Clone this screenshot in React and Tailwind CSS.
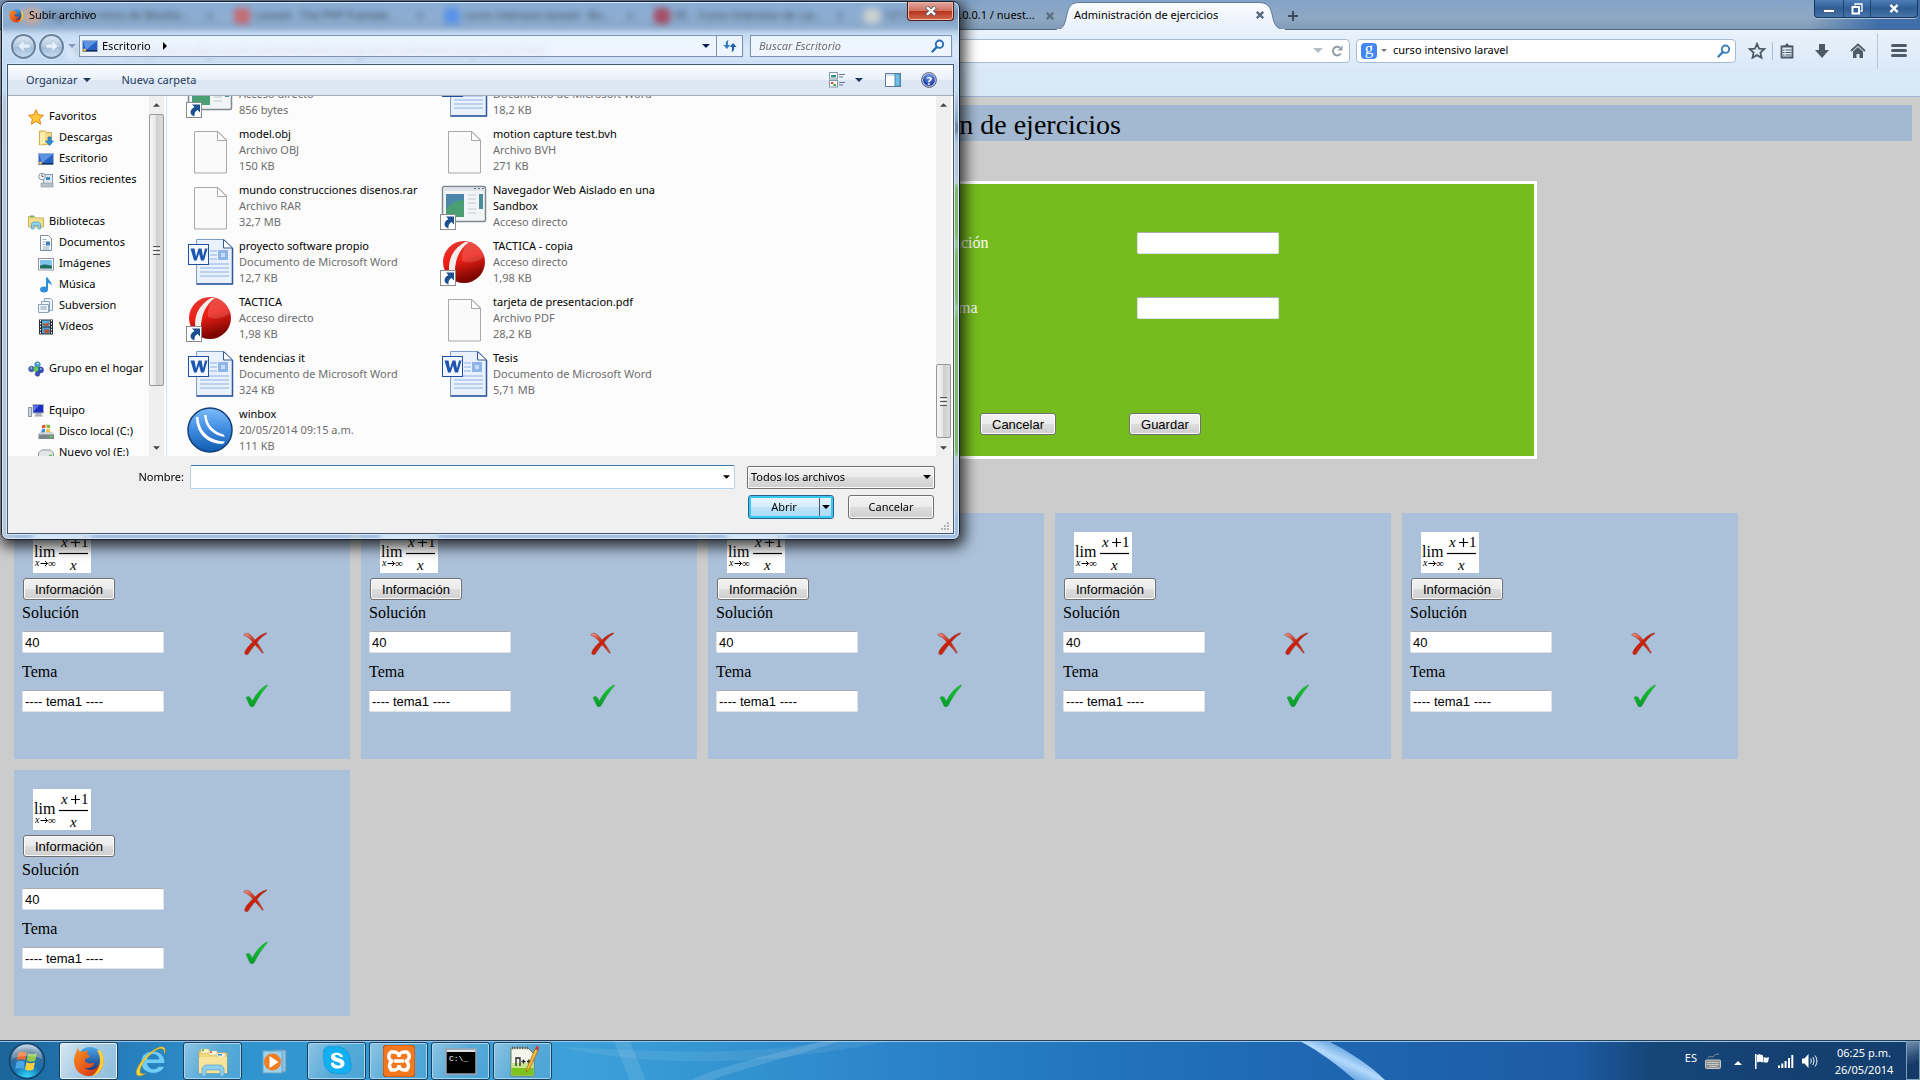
import React from "react";

const ui = "font-['Noto_Sans','Open_Sans',sans-serif]";
const arial = "font-['Liberation_Sans',Arial,sans-serif]";
const serif = "font-['Liberation_Serif','Times_New_Roman',serif]";

/* ---------- small shared glyphs ---------- */

function Triangle({ className = "", dir = "down" }) {
  const d = { down: "M0 0h8L4 4z", right: "M0 0v8l4-4z", up: "M0 4h8L4 0z" }[dir];
  const box = dir === "right" ? "0 0 4 8" : "0 0 8 4";
  return (
    <svg viewBox={box} className={className} fill="currentColor" aria-hidden="true">
      <path d={d} />
    </svg>
  );
}

function FirefoxIcon({ className }) {
  return (
    <svg viewBox="0 0 32 32" className={className} aria-hidden="true">
      <defs>
        <linearGradient id="ffGlobe" x1="0" y1="0" x2="0" y2="1">
          <stop offset="0" stopColor="#4aa8e8" />
          <stop offset="1" stopColor="#0f2f7a" />
        </linearGradient>
        <linearGradient id="ffTail" x1="0" y1="0" x2="1" y2="1">
          <stop offset="0" stopColor="#f7931e" />
          <stop offset="0.6" stopColor="#e5521b" />
          <stop offset="1" stopColor="#b8260f" />
        </linearGradient>
      </defs>
      <circle cx="17" cy="14.500" r="12.500" fill="url(#ffGlobe)" />
      <path d="M28 7c3 5 3.500 12 .5 17-3 5-9 7.500-14 7-8-1-13.500-7-13.500-15C1 12 2 9 3.500 7L4 3l3.500 4c1.500-.8 3-.8 4.500-.3L15 5l-1 4.500 3 1.500c-1 2-3 2-4.500 2.500-1 1.500-.5 3 1 4 3 2 6 0 8 .5-1 4-6 6-10 4.500 4 4 11 3 14-2 2-3.500 2.500-8 .5-12z" fill="url(#ffTail)" />
      <path d="M27 5c4 5 5 12 2 18-2 4-6 7-10 8 5-4 8-9 8-15 0-4-1-8-3-10z" fill="#ffcf3a" />
    </svg>
  );
}

function SearchGlyph({ className, color = "#3b7fb8" }) {
  return (
    <svg viewBox="0 0 14 14" className={className} fill="none" stroke={color} aria-hidden="true">
      <circle cx="8.500" cy="5.200" r="3.700" strokeWidth="1.900" />
      <path d="M5.800 8L1.500 12.500" strokeWidth="2.400" strokeLinecap="round" />
    </svg>
  );
}

/* ---------- browser ---------- */

const tabs = [
  { title: "Página de inicio de Mozilla...", color: "#e8a06a" },
  { title: "Laravel - The PHP Framew...", color: "#e04438" },
  { title: "curso intensivo laravel - Bu...", color: "#3f7fe8" },
  { title: "05. - Curso Intensivo de Lar...", color: "#b01820" },
  { title: "127.0.0.1 / 127.0.0.1 / nuest...", color: "#e8dcc0" },
];

function TabClose({ label }) {
  return (
    <button type="button" aria-label={label} className="shrink-0 text-[#5c6f83]">
      <svg viewBox="0 0 8 8" className="block h-2 w-2" stroke="currentColor" strokeWidth="2.400" aria-hidden="true">
        <path d="M.8.8l6.400 6.400M7.200.8L.8 7.200" />
      </svg>
    </button>
  );
}

function TabStrip() {
  return (
    <div className="relative flex h-[30px] items-end justify-between border-b border-[#4a6785] bg-[linear-gradient(180deg,#82a3c8_0%,#8fa8c3_60%,#829ab5_100%)]">
      <div className={`flex h-full pl-4 text-[11px] text-black ${ui}`}>
        {tabs.map((t) => (
          <div key={t.title} className="flex w-[210px] items-center gap-1 pl-2 pr-3 pt-0.5">
            <span className="h-4 w-4 shrink-0 rounded-sm" style={{ backgroundColor: t.color }} />
            <span className="flex-1 whitespace-nowrap">{t.title}</span>
            <TabClose label="Cerrar pestaña" />
          </div>
        ))}
        <div className="relative flex w-[210px] items-center justify-between px-2 pt-0.5">
          <svg viewBox="0 0 230 28" className="absolute -left-2.5 top-0.5 h-7 w-[230px]" aria-hidden="true">
            <defs>
              <linearGradient id="tabFill" x1="0" y1="0" x2="0" y2="1">
                <stop offset="0" stopColor="#fbfcfe" />
                <stop offset="1" stopColor="#e9f1fb" />
              </linearGradient>
            </defs>
            <path d="M0 28C9 27 9 20 11 12C13 3 16 .5 24 .5H202C211 .5 214 4 216 12C218 21 219 27 229 28z" fill="url(#tabFill)" stroke="#5f7d9c" />
            <path d="M1 28H229" stroke="#e9f1fb" strokeWidth="2" />
          </svg>
          <span className="relative">Administración de ejercicios</span>
          <span className="relative pr-1">
            <TabClose label="Cerrar pestaña activa" />
          </span>
        </div>
        <button type="button" aria-label="Nueva pestaña" className="ml-3 pt-0.5">
          <svg viewBox="0 0 10 10" className="h-2.5 w-2.5" stroke="#3b4c5c" strokeWidth="2" aria-hidden="true">
            <path d="M5 0v10M0 5h10" />
          </svg>
        </button>
      </div>
      <div className="flex h-full w-[160px] items-start justify-end bg-[linear-gradient(110deg,transparent_35%,#3f6ea8_75%)] pr-0.5">
        <div className="flex h-[18px] overflow-hidden rounded-b border border-t-0 border-[#16365c] bg-[linear-gradient(180deg,#4f7db5,#2f5d95_50%,#4876a8)] shadow-[0_1px_0_#a9c2dd]">
          <button type="button" aria-label="Minimizar" className="flex w-[29px] items-center justify-center border-r border-[#1f4470] pt-1">
            <span className="h-1 w-3 border border-[#50607a] bg-white" />
          </button>
          <button type="button" aria-label="Restaurar" className="flex w-[27px] items-center justify-center border-r border-[#1f4470]">
            <svg viewBox="0 0 12 12" className="h-3 w-3" fill="none" stroke="#fff" aria-hidden="true">
              <path d="M4 2.500V1h7v7H9.500" strokeWidth="1.300" />
              <rect x="1.500" y="4" width="6.500" height="6.500" strokeWidth="2" />
            </svg>
          </button>
          <button type="button" aria-label="Cerrar" className="flex w-[46px] items-center justify-center">
            <svg viewBox="0 0 10 10" className="h-[9px] w-2.5" stroke="#fff" strokeWidth="2.600" aria-hidden="true">
              <path d="M1 1l8 8M9 1L1 9" />
            </svg>
          </button>
        </div>
      </div>
    </div>
  );
}

function Toolbar() {
  return (
    <div className="h-[67px] border-b border-[#9fb8d3] bg-[linear-gradient(180deg,#eaf2fb_0%,#dae9f8_60%,#d9e8f7_100%)]">
      <div className="flex h-[41px] items-center pr-[13px]">
        <div className="ml-16 flex h-6 flex-1 items-center rounded-sm border border-[#a9bccf] bg-white pr-1.5">
          <input
            aria-label="Dirección"
            readOnly
            value="127.0.0.1/proyecto/codigo/web/administrador/preguntas/administrarejercicios.html"
            className={`min-w-0 flex-1 pl-2 text-[12px] text-[#333] outline-none ${ui}`}
          />
          <Triangle className="mr-2 h-[7px] w-2.5 text-[#b6bec8]" />
          <button type="button" aria-label="Recargar">
            <svg viewBox="0 0 12 12" className="block h-3 w-3" fill="none" stroke="#929da9" strokeWidth="2" aria-hidden="true">
              <path d="M9.800 8.500A4.300 4.300 0 1 1 9 2.800" />
              <path d="M11.500.5v5H6.500z" fill="#929da9" stroke="none" />
            </svg>
          </button>
        </div>
        <div className="ml-1.5 flex h-6 w-[380px] items-center rounded-sm border border-[#a9bccf] bg-white px-1">
          <span className="flex h-4 w-4 items-center justify-center rounded-sm bg-[#4285f4] pb-1 font-['Liberation_Serif',serif] text-[17px] leading-[10px] text-white">g</span>
          <Triangle className="ml-1 h-[3px] w-1.5 text-[#777]" />
          <input aria-label="Buscar" defaultValue="curso intensivo laravel" className={`ml-1.5 min-w-0 flex-1 text-[11px] text-black outline-none ${ui}`} />
          <SearchGlyph className="h-3.5 w-3.5" />
        </div>
        <div className="flex items-center text-[#4d5b68]">
          <button type="button" aria-label="Añadir a marcadores" className="ml-3">
            <svg viewBox="0 0 18 18" className="block h-[18px] w-[18px]" fill="none" stroke="currentColor" strokeWidth="1.800" aria-hidden="true">
              <path d="M9 1.800l2.100 4.800 5.200.5-3.900 3.500 1.100 5.100L9 13.100l-4.500 2.600 1.100-5.100L1.700 7.100l5.200-.5z" />
            </svg>
          </button>
          <span className="ml-1.5 h-[18px] w-px bg-[#a9c0d6]" />
          <button type="button" aria-label="Marcadores" className="ml-[7px]">
            <svg viewBox="0 0 14 16" className="block h-4 w-3.5" aria-hidden="true">
              <path d="M1.500 3.500h11v11h-11z" fill="none" stroke="currentColor" strokeWidth="1.800" />
              <path d="M3 4h8V2.500H9L7 0 5 2.500H3z" fill="currentColor" />
              <path d="M3 7h1.500M5.500 7h6M3 9.500h1.500M5.500 9.500h6M3 12h1.500M5.500 12h6" stroke="currentColor" strokeWidth="1.200" />
            </svg>
          </button>
          <button type="button" aria-label="Descargas" className="ml-[21px]">
            <svg viewBox="0 0 14 14" className="block h-3.5 w-3.5" fill="currentColor" aria-hidden="true">
              <path d="M4 0h6v6h4l-7 8-7-8h4z" />
            </svg>
          </button>
          <button type="button" aria-label="Inicio" className="ml-[21px]">
            <svg viewBox="0 0 16 15" className="block h-[15px] w-4" aria-hidden="true">
              <path d="M1 8l7-6.500L15 8" fill="none" stroke="currentColor" strokeWidth="1.800" />
              <path d="M3 8.500l5-4.600 5 4.600V15H9.500v-4h-3v4H3z" fill="currentColor" />
            </svg>
          </button>
          <span className="ml-[11px] h-9 w-px bg-[#b4c6d8]" />
          <button type="button" aria-label="Menú" className="ml-[13px] flex w-4 flex-col gap-0.5">
            <span className="h-[3px] rounded bg-[#4d5b68]" />
            <span className="h-[3px] rounded bg-[#4d5b68]" />
            <span className="h-[3px] rounded bg-[#4d5b68]" />
          </button>
        </div>
      </div>
    </div>
  );
}

/* ---------- web page ---------- */

function PageButton({ children }) {
  return (
    <button
      type="button"
      className={`h-[22px] rounded-[3px] border border-[#707070] bg-[linear-gradient(180deg,#f2f2f2_0%,#ebebeb_50%,#dddddd_50%,#cfcfcf_100%)] px-[11px] text-[13px] leading-none text-black shadow-[inset_0_0_0_1px_#fcfcfc] ${arial}`}
    >
      {children}
    </button>
  );
}

function TextBox(props) {
  return (
    <input
      type="text"
      className={`block h-[22px] w-[142px] rounded-[2px] border border-[#dfe3ea] border-t-[#abadb3] bg-white px-0.5 text-[13px] text-black outline-none ${arial}`}
      {...props}
    />
  );
}

function LimitFormula() {
  return (
    <svg viewBox="0 0 58 41" role="img" aria-label="Límite" className={`block h-[41px] w-[58px] bg-white ${serif}`}>
      <text x="1" y="25" fontSize="16">lim</text>
      <text x="2" y="34" fontSize="10" fontStyle="italic">x</text>
      <path d="M7.500 31.500h7M12 29l2.500 2.500L12 34" fill="none" stroke="#000" />
      <text x="15" y="35" fontSize="11">∞</text>
      <text x="28" y="15" fontSize="15" fontStyle="italic">x</text>
      <path d="M38 10.500h9M42.500 6v9" stroke="#000" strokeWidth="1.200" />
      <text x="48" y="15" fontSize="15">1</text>
      <path d="M26 21.500h29" stroke="#000" strokeWidth="1.200" />
      <text x="37" y="38" fontSize="15" fontStyle="italic">x</text>
    </svg>
  );
}

function ExerciseCard({ id }) {
  return (
    <article className={`h-[246px] w-[336px] bg-[#abc1d9] px-2 pt-[19px] text-[16px] leading-5 text-black ${serif}`}>
      <div className="ml-[11px]">
        <LimitFormula />
      </div>
      <div className="ml-px mt-[5px] flex">
        <PageButton>Información</PageButton>
      </div>
      <label htmlFor={`sol-${id}`} className="mt-[3px] block">Solución</label>
      <div className="mt-[5px] flex h-7 items-center gap-[79px]">
        <TextBox id={`sol-${id}`} defaultValue="40" />
        <button type="button" aria-label="Eliminar" className="pt-1">
          <svg viewBox="0 0 24 24" className="block h-6 w-6" aria-hidden="true">
            <defs>
              <linearGradient id="cross" x1="0" y1="0" x2="1" y2="1">
                <stop offset="0" stopColor="#f0a090" />
                <stop offset="0.45" stopColor="#c81e08" />
                <stop offset="1" stopColor="#d8452c" />
              </linearGradient>
            </defs>
            <path d="M.5 3C2 .8 5 .8 7 2.500c2 1.600 3.500 3.500 5 5.500C15.500 4.500 19 2 23.500.8c.5.600-.2 1.200-.7 1.500C19.500 4.200 16.500 7 14 10.500c2.500 3.500 4.800 7 6.300 10.500-.5.400-1 .2-1.500-.5C16.500 17.500 14.200 15 12 12.800 9.500 16 7 19 5.500 21.800c-1.500 1.500-4 .9-3.800-1.300C3 16.500 6.500 13 9.700 10 7.500 7 5 5 .5 3z" fill="url(#cross)" stroke="#8d3a33" strokeWidth=".5" />
          </svg>
        </button>
      </div>
      <label htmlFor={`tema-${id}`} className="mt-1.5 block">Tema</label>
      <div className="mt-0.5 flex h-7 items-end gap-[81px]">
        <TextBox id={`tema-${id}`} defaultValue="---- tema1 ----" />
        <button type="button" aria-label="Aceptar" className="self-start">
          <svg viewBox="0 0 24 24" className="block h-6 w-6" aria-hidden="true">
            <defs>
              <linearGradient id="tick" x1="0" y1="0" x2="0" y2="1">
                <stop offset="0" stopColor="#0fce28" />
                <stop offset="1" stopColor="#079a2a" />
              </linearGradient>
            </defs>
            <path d="M1 13.500C2.500 12 4.500 12 5.500 14L7.300 17C11 10 15.500 4.500 22 .8c.5.200.6.700.2 1.100C17 8 13 14 9.200 21.500c-1 1.600-3.600 1.700-4.300.2z" fill="url(#tick)" stroke="#2f8f48" strokeWidth=".5" />
          </svg>
        </button>
      </div>
    </article>
  );
}

function ExercisePage() {
  return (
    <main className={`flex-1 p-2 ${serif}`}>
      <h1 className="bg-[#a3b8d1] pt-1 text-center text-[28px] leading-8 text-black">Administración de ejercicios</h1>
      <form className="mx-auto mt-10 w-[1154px] max-w-full border-[3px] border-white bg-[#76bc1e] pb-[21px] pt-[26px] text-[16px] text-white">
        <div className="grid grid-cols-[1fr_249px_1fr] items-center">
          <span />
          <label htmlFor="nueva-solucion" className="text-center leading-[65px]">Solución</label>
          <div className="pl-[52px]"><TextBox id="nueva-solucion" /></div>
          <span />
          <label htmlFor="nuevo-tema" className="text-center leading-[65px]">Tema</label>
          <div className="pl-[52px]"><TextBox id="nuevo-tema" /></div>
        </div>
        <div className="ml-[50%] mt-[73px] flex gap-[73px] pl-5">
          <PageButton>Cancelar</PageButton>
          <PageButton>Guardar</PageButton>
        </div>
      </form>
      <section className="mt-[54px] flex flex-wrap gap-[11px] px-1.5">
        {[1, 2, 3, 4, 5, 6].map((n) => (
          <ExerciseCard key={n} id={n} />
        ))}
      </section>
    </main>
  );
}

/* ---------- file dialog icons ---------- */

function ShortcutArrow() {
  return (
    <g>
      <rect x=".5" y="32.500" width="15" height="15" fill="#fff" stroke="#8b8b8b" />
      <path d="M6 34.500h8v8l-2.500-2.500c-2.500 1.500-3.500 3.500-3 6.500C4 45 2.500 40.500 8.500 37z" fill="#1d4f93" />
    </g>
  );
}

function FileIcon({ kind, link }) {
  return (
    <svg viewBox="0 0 48 48" className="block h-12 w-12 shrink-0" aria-hidden="true">
      {kind === "blank" && (
        <g>
          <path d="M8.500 5.500H32l8.500 8.500v33h-32z" fill="#fafafa" stroke="#a9a9a9" />
          <path d="M31.500 5.500V14.500h9z" fill="#fff" stroke="#a9a9a9" />
        </g>
      )}
      {kind === "word" && (
        <g>
          <path d="M10.500.5H38l8.500 8.500v36h-36z" fill="#e8f1fd" stroke="#7c9ccb" />
          <path d="M46.500 9v36h-36" fill="none" stroke="#2d569c" strokeWidth="1.500" />
          <path d="M37.500.5V9h9z" fill="#fff" stroke="#34599a" />
          <path d="M24 12h7M24 16h7M24 20h7M14 25h29M14 29h29M14 33h29M14 37h29" stroke="#8fb0df" />
          <rect x="32" y="11" width="10" height="10" fill="#8fb4ea" />
          <rect x="35" y="14" width="4" height="4" fill="#c7dcf8" />
          <rect x="2.500" y="5.500" width="20" height="20" fill="#f4f8fe" stroke="#1f4fa0" />
          <path d="M4.500 9.500h4l1.500 8 2.500-8h3l1.500 8 2-8h2.500l-3.500 12h-3l-2-7-2.300 7H8z" fill="#1c55b0" />
        </g>
      )}
      {kind === "window" && (
        <g>
          <rect x="2.500" y="4.500" width="43" height="35" rx="1.500" fill="#f3f4f6" stroke="#7f8790" strokeWidth="1.500" />
          <path d="M3 6h42v3H3z" fill="#dfe4ea" />
          <path d="M34 6.500h2M38 6.500h2M42 6.500h2" stroke="#5c6877" />
          <rect x="6" y="12" width="18" height="23" fill="#4a9f72" />
          <path d="M6 12h18v6C16 18 10 22 6 28z" fill="#4c86a8" />
          <path d="M28 13h8M28 17h8M28 21h8M28 27h8M28 31h8" stroke="#c6c9cd" />
          <rect x="39" y="12" width="4" height="15" fill="#4b8d9b" />
        </g>
      )}
      {kind === "ball" && (
        <g>
          <defs>
            <linearGradient id="redBall" x1="0" y1="0" x2="0.300" y2="1">
              <stop offset="0" stopColor="#e03a34" />
              <stop offset="0.5" stopColor="#ee2018" />
              <stop offset="1" stopColor="#7c0500" />
            </linearGradient>
          </defs>
          <circle cx="24" cy="24" r="21" fill="url(#redBall)" />
          <path d="M29 4C18 12 14 24 15 40l-5-3C7 25 11 12 25 4z" fill="#f1eeee" />
          <path d="M22 23c8 3 16 1 22-4C42 10 36 5 29 4c-5 5-8 11-7 19z" fill="#fff" opacity=".15" />
        </g>
      )}
      {kind === "winbox" && (
        <g>
          <defs>
            <linearGradient id="wbx" x1="0" y1="0" x2="0" y2="1">
              <stop offset="0" stopColor="#7cbbfa" />
              <stop offset="0.5" stopColor="#3f8be0" />
              <stop offset="1" stopColor="#0f5bb0" />
            </linearGradient>
          </defs>
          <circle cx="24" cy="24" r="22" fill="url(#wbx)" stroke="#123f78" strokeWidth="1.500" />
          <path d="M10 11c0 15 10 27 27 27l2-2.500C24 35 13 26 12.500 11z" fill="#fff" />
          <path d="M18 9c1 12 8 20 21 22l-1.500-2.500C28 26 21 19 20.500 9z" fill="#fff" />
        </g>
      )}
      {link && <ShortcutArrow />}
    </svg>
  );
}

function NavIcon({ kind }) {
  const icons = {
    star: <path d="M8 .8l2.200 4.900 5.300.6-3.900 3.600 1.100 5.300L8 12.500l-4.700 2.700 1.100-5.300L.5 6.300l5.300-.6z" fill="#ffc83a" stroke="#e8831d" />,
    download: (
      <g>
        <path d="M1.500 1h6l1 1.500h5V14l-12 1z" fill="#f3d982" stroke="#cfae55" />
        <path d="M2 3l5-1.500V13l-5 2z" fill="#fbeeb0" />
        <path d="M10 7h3v4h2.500L11.500 15.500 7.500 11H10z" fill="#2d8fe0" stroke="#1566ad" strokeWidth=".6" />
      </g>
    ),
    desktop: (
      <g>
        <rect x=".5" y="2.500" width="15" height="11" fill="#2662c4" stroke="#9db1cc" />
        <path d="M1 3h14L4 12z" fill="#5d93e4" />
        <path d="M1 12h14v1.500H1z" fill="#16305e" />
        <circle cx="2.500" cy="12" r="1.500" fill="#f3c14b" />
      </g>
    ),
    recent: (
      <g>
        <rect x="5.500" y="2.500" width="9" height="9" fill="#dce9f4" stroke="#8b99a7" />
        <path d="M8 5h4v3H8z" fill="#3f8ac9" />
        <path d="M3 11h12v4H3z" fill="#b9c0c8" stroke="#8a929b" strokeWidth=".6" />
        <circle cx="4" cy="4.500" r="3.300" fill="#f2f4f6" stroke="#8a95a0" />
        <path d="M4 2.500v2h1.500" stroke="#555" fill="none" />
      </g>
    ),
    library: (
      <g>
        <path d="M.5 2.500h6L8 4h7.500v9H.5z" fill="#f4dd88" stroke="#cdae58" />
        <path d="M2 1.500h4v2H2z" fill="#6bb36a" />
        <path d="M3.500 15V9.500l2-1.500h5l2 1.500V15H10v-3.500H6V15z" fill="#8cd0ee" stroke="#4a9cc4" strokeWidth=".7" />
      </g>
    ),
    doc: (
      <g>
        <path d="M2.500.5h8l3 3v12h-11z" fill="#fff" stroke="#7f8b98" />
        <path d="M4.500 4.500h4M4.500 7h3M4.500 9.500h3M4.500 12h7M4.500 14h7" stroke="#8fa9c4" />
        <rect x="8" y="6.500" width="4" height="4" fill="#3d7dbd" />
      </g>
    ),
    image: (
      <g>
        <rect x=".5" y="2.500" width="15" height="11.500" fill="#fff" stroke="#8c97a3" />
        <rect x="2" y="4" width="12" height="8.500" fill="#7fc4ee" />
        <path d="M2 10c3-2 5-2 12 0v2.500H2z" fill="#1f6e5c" />
      </g>
    ),
    music: (
      <g fill="#2d8fd6">
        <path d="M8 .5h2c0 3 4.500 4 3.500 8.500C13 7 11.500 6 10 6v6.500H8z" />
        <ellipse cx="6" cy="12.500" rx="4" ry="3" />
      </g>
    ),
    svn: (
      <g fill="#eef4fb" stroke="#8aa3bd">
        <path d="M6.500.5h6l2 2v10h-8z" />
        <path d="M3.500 3.500h8v10h-8z" />
        <path d="M.5 6.500h10v8H.5z" />
        <path d="M2.500 9h6M2.500 11h6" />
      </g>
    ),
    video: (
      <g>
        <rect x="1" y=".5" width="14" height="15" fill="#2b2f35" />
        <rect x="4" y="1.500" width="8" height="6" fill="#5ab0dc" />
        <rect x="4" y="8.500" width="8" height="6" fill="#4f9ecb" />
        <path d="M5 4l3 1 3-2v3L8 7 5 6zM6 10l3 1 2-1v4H7z" fill="#c04a2c" />
        <path d="M2.500 1v14M13.500 1v14" stroke="#fff" strokeDasharray="1.500 1.500" />
      </g>
    ),
    group: (
      <g>
        <circle cx="9.500" cy="3.500" r="2.800" fill="#4aa7df" stroke="#1f5f9c" strokeWidth=".5" />
        <circle cx="3.500" cy="8" r="2.800" fill="#4a62c4" stroke="#26347c" strokeWidth=".5" />
        <circle cx="12.500" cy="9" r="3" fill="#2f4fc0" stroke="#1b2c78" strokeWidth=".5" />
        <circle cx="8" cy="8" r="2.600" fill="#5fd05c" stroke="#2b8a2c" strokeWidth=".5" />
        <circle cx="9.500" cy="13" r="2.300" fill="#3c53b5" stroke="#1b2c78" strokeWidth=".5" />
        <path d="M2.500 7h1.500M9 2.500h1.500M12 8h1.500" stroke="#fff" />
      </g>
    ),
    computer: (
      <g>
        <rect x=".5" y="4.500" width="3" height="9" fill="#cfd6dc" stroke="#8d98a2" />
        <rect x="5" y="1.500" width="10.500" height="8.500" fill="#1b2fc0" stroke="#a9b2bd" />
        <path d="M6 2.500h5L6 8z" fill="#5d78ee" />
        <path d="M8 10.500h5v2H8zM6 13h9" fill="#b7bfc7" stroke="#a0a8b0" />
      </g>
    ),
    disk: (
      <g>
        <path d="M.5 10l2-2h11l2.500 2v5H.5z" fill="#7d868f" />
        <path d="M.5 10.500H16V9.500l-2.500-2h-11z" fill="#d0d5da" />
        <path d="M11.500 12.700h3" stroke="#4ce04a" strokeWidth="1.500" />
        <path d="M4 1.500l3.500-1v3.300l-3.500.8z" fill="#e6552d" />
        <path d="M8.500.5l3.500.6v3.200l-3.500-.5z" fill="#7cba3f" />
        <path d="M3.500 5.500L7 4.800V8l-3.500.6z" fill="#3d8fd6" />
        <path d="M8.300 4.800l3.500.5v3.200L8.300 8z" fill="#f3c22e" />
      </g>
    ),
    drive: (
      <g>
        <path d="M.5 8l3-3h9l3 3v5h-15z" fill="#e3e6e9" stroke="#8c949c" />
        <path d="M11 10.500h3" stroke="#4cc04a" strokeWidth="1.500" />
      </g>
    ),
  };
  return (
    <svg viewBox="0 0 16 16" className="h-4 w-4 shrink-0" aria-hidden="true">
      {icons[kind]}
    </svg>
  );
}

const places = [
  { root: ["Favoritos", "star"], items: [["Descargas", "download"], ["Escritorio", "desktop"], ["Sitios recientes", "recent"]] },
  { root: ["Bibliotecas", "library"], items: [["Documentos", "doc"], ["Imágenes", "image"], ["Música", "music"], ["Subversion", "svn"], ["Vídeos", "video"]] },
  { root: ["Grupo en el hogar", "group"], items: [] },
  { root: ["Equipo", "computer"], items: [["Disco local (C:)", "disk"], ["Nuevo vol (E:)", "drive"]] },
];

const files = [
  { lines: ["", "Acceso directo", "856 bytes"], kind: "window", link: true },
  { lines: ["", "Documento de Microsoft Word", "18,2 KB"], kind: "word" },
  { lines: ["model.obj", "Archivo OBJ", "150 KB"], kind: "blank" },
  { lines: ["motion capture test.bvh", "Archivo BVH", "271 KB"], kind: "blank" },
  { lines: ["mundo construcciones disenos.rar", "Archivo RAR", "32,7 MB"], kind: "blank" },
  { lines: ["Navegador Web Aislado en una", "Sandbox", "Acceso directo"], kind: "window", link: true, dark: 2 },
  { lines: ["proyecto software propio", "Documento de Microsoft Word", "12,7 KB"], kind: "word" },
  { lines: ["TACTICA - copia", "Acceso directo", "1,98 KB"], kind: "ball", link: true },
  { lines: ["TACTICA", "Acceso directo", "1,98 KB"], kind: "ball", link: true },
  { lines: ["tarjeta de presentacion.pdf", "Archivo PDF", "28,2 KB"], kind: "blank" },
  { lines: ["tendencias it", "Documento de Microsoft Word", "324 KB"], kind: "word" },
  { lines: ["Tesis", "Documento de Microsoft Word", "5,71 MB"], kind: "word" },
  { lines: ["winbox", "20/05/2014 09:15 a.m.", "111 KB"], kind: "winbox" },
];

function Grip() {
  return (
    <span className="flex w-[7px] flex-col gap-px">
      <span className="h-px bg-[#555]" />
      <span className="h-px bg-white" />
      <span className="h-px bg-[#555]" />
      <span className="h-px bg-white" />
      <span className="h-px bg-[#555]" />
    </span>
  );
}

function ScrollBar({ before, thumb }) {
  return (
    <div className="flex w-[15px] shrink-0 flex-col bg-[#efefef]">
      <span className="flex h-[18px] items-center justify-center">
        <Triangle dir="up" className="h-1 w-[7px] text-[#444]" />
      </span>
      <div className={before} />
      <div className={`${thumb} flex items-center justify-center rounded-[2px] border border-[#979797] bg-[linear-gradient(90deg,#f5f5f5_0%,#e6e6e6_45%,#cfcfd1_50%,#dcdcdc_100%)]`}>
        <Grip />
      </div>
      <div className="flex-1" />
      <span className="flex h-4 items-center justify-center">
        <Triangle className="h-1 w-[7px] text-[#444]" />
      </span>
    </div>
  );
}

function RoundArrow({ flip, label }) {
  return (
    <button type="button" aria-label={label} className="h-[25px] w-[25px] rounded-full border-2 border-[#6c83a0] bg-[linear-gradient(180deg,#dce8f4_0%,#b4c8de_50%,#9fb9d6_51%,#c5dcf2_100%)] shadow-[0_0_1px_1px_#d6e6f6]">
      <svg viewBox="0 0 16 16" className={flip ? "mx-auto block h-4 w-4 rotate-180" : "mx-auto block h-4 w-4"} aria-hidden="true">
        <path d="M8 2L2 8l6 6v-4h6V6H8z" fill="#e6f0fa" stroke="#b3c7dd" strokeWidth=".7" />
      </svg>
    </button>
  );
}

function FileDialog() {
  return (
    <section
      role="dialog"
      aria-label="Subir archivo"
      className={`absolute left-px top-px flex w-[959px] flex-col rounded-[7px] border border-[#17202c] bg-[#8fbdf055] px-[5px] pb-[5px] text-[11px] text-black shadow-[inset_0_0_0_1px_#d9e8f8,2px_4px_14px_3px_rgba(0,0,0,0.75)] backdrop-blur-[3px] ${ui}`}
    >
      <header className="flex h-7 items-start justify-between pl-0.5">
        <h2 className="flex h-[27px] items-center gap-[5px]">
          <FirefoxIcon className="h-[15px] w-[15px]" />
          Subir archivo
        </h2>
        <button type="button" aria-label="Cerrar diálogo" className="flex h-[19px] w-[47px] items-center justify-center rounded-b-[4px] border border-t-0 border-[#5a1712] bg-[linear-gradient(180deg,#e0a79c_0%,#cf7262_48%,#b8321d_50%,#cd6a4e_100%)] shadow-[inset_0_0_0_1px_#eab9ae]">
          <svg viewBox="0 0 12 10" className="h-2.5 w-3" aria-hidden="true">
            <path d="M1.500 1l9 8M10.500 1l-9 8" stroke="#56606e" strokeWidth="3.800" />
            <path d="M2 1.400l8 7.200M10 1.400l-8 7.200" stroke="#fff" strokeWidth="2.200" />
          </svg>
        </button>
      </header>

      <div className="flex h-[34px] items-center pb-0.5 pl-1 pr-0.5">
        <RoundArrow label="Atrás" />
        <span className="w-[3px]" />
        <RoundArrow flip label="Adelante" />
        <Triangle className="ml-1 h-1.5 w-2 text-[#7f9cbe]" />
        <div className="ml-[3px] flex h-[22px] flex-1 items-center border border-[#7b94b2] bg-[#f4f9ffcc] shadow-[0_0_0_1px_#c9def5]">
          <span className="ml-0.5"><NavIcon kind="desktop" /></span>
          <span className="ml-1">Escritorio</span>
          <Triangle dir="right" className="ml-3 h-2 w-1" />
          <span className="flex-1" />
          <Triangle className="mr-1.5 h-1 w-2 text-[#0c1f57]" />
          <button type="button" aria-label="Actualizar" className="flex h-full w-[26px] items-center justify-center border-l border-[#7b94b2]">
            <svg viewBox="0 0 14 12" className="h-3 w-3.5" fill="#2f7cc4" aria-hidden="true">
              <path d="M5.500 0C3 1 2.500 2.500 2.800 5H.3L4 9l3.200-4H5c-.2-2 0-3.500.5-5z" />
              <path d="M8.500 12c2.500-1 3-2.500 2.700-5h2.500L10 3 6.800 7H9c.2 2 0 3.500-.5 5z" fill="#235fa6" />
            </svg>
          </button>
        </div>
        <div className="ml-[7px] flex h-[22px] w-[202px] items-center border border-[#7b94b2] bg-[#f4f9ffcc] pr-1.5 shadow-[0_0_0_1px_#c9def5]">
          <input aria-label="Buscar Escritorio" placeholder="Buscar Escritorio" className="min-w-0 flex-1 pl-2 italic outline-none placeholder:text-[#6d6d6d]" />
          <SearchGlyph className="h-3.5 w-3.5" color="#2a6db0" />
        </div>
      </div>

      <div className="flex flex-col border border-[#46586e] bg-[#f0f0f0] shadow-[0_0_0_1px_#d3e6fa]">
        <div className="flex h-[31px] items-center border-b border-[#a0afc3] bg-[linear-gradient(180deg,#fbfdff_0%,#eaf1fa_48%,#dce6f4_50%,#dde8f5_100%)] text-[#1e395b]">
          <button type="button" className="ml-[18px] flex items-center gap-1.5">
            Organizar
            <Triangle className="h-1 w-2" />
          </button>
          <button type="button" className="ml-[30px]">Nueva carpeta</button>
          <span className="flex-1" />
          <button type="button" aria-label="Cambiar vista" className="flex items-center gap-2.5">
            <svg viewBox="0 0 16 16" className="h-4 w-4" aria-hidden="true">
              <rect x=".5" y=".5" width="8" height="6.500" fill="#fff" stroke="#8796a6" />
              <rect x="2" y="3" width="5" height="2.500" fill="#2f8f7d" />
              <rect x=".5" y="8.500" width="8" height="6.500" fill="#fff" stroke="#8796a6" />
              <path d="M2 10h2.500v2H2z" fill="#d84a2a" />
              <path d="M4.500 12H7v2H4.500z" fill="#3aa23a" />
              <path d="M10 2.500h6M10 5h4M10 10.500h6M10 13h4" stroke="#65788e" />
            </svg>
            <Triangle className="h-1 w-2" />
          </button>
          <button type="button" aria-label="Panel de vista previa" className="ml-[22px]">
            <svg viewBox="0 0 16 14" className="block h-3.5 w-4" aria-hidden="true">
              <rect x=".5" y=".5" width="15" height="13" fill="#fff" stroke="#5e7c9c" />
              <path d="M1 1h14v2H1z" fill="#d2dfec" />
              <rect x="10" y="1" width="5" height="12" fill="#6fc0e4" stroke="#4a88ad" />
            </svg>
          </button>
          <button type="button" aria-label="Ayuda" className="ml-5 mr-4 flex h-4 w-4 items-center justify-center rounded-full border border-[#6d7485] bg-[radial-gradient(circle_at_50%_25%,#6e96ef,#1b3ba5_70%)] text-[11px] font-bold leading-none text-white shadow-[inset_0_0_0_1px_#c8cfe0]">?</button>
        </div>

        <div className="flex h-[360px] bg-[#fcfcfc]">
          <nav aria-label="Ubicaciones" className="flex w-[141px] shrink-0 flex-col gap-[21px] overflow-hidden whitespace-nowrap pt-2.5">
            {places.map(({ root, items }) => (
              <ul key={root[0]}>
                <li className="flex h-[21px] items-center gap-[5px] pl-5">
                  <NavIcon kind={root[1]} />
                  {root[0]}
                </li>
                {items.map(([label, icon]) => (
                  <li key={label} className="flex h-[21px] items-center gap-[5px] pl-[30px]">
                    <NavIcon kind={icon} />
                    {label}
                  </li>
                ))}
              </ul>
            ))}
          </nav>
          <ScrollBar before="h-0" thumb="h-[272px]" />
          <div className="ml-0.5 flex min-w-0 flex-1 flex-col justify-end overflow-hidden border-l border-[#d6e5f5] pl-[19px]">
            <ul className="grid grid-cols-[254px_254px]">
              {files.map((f, i) => (
                <li key={i} className="flex h-14 gap-[5px] whitespace-nowrap">
                  <span className={f.kind === "word" ? "pt-[7px]" : "pt-1.5"}>
                    <FileIcon kind={f.kind} link={f.link} />
                  </span>
                  <span className="flex flex-col pt-1.5 leading-4 text-[#6d6d6d]">
                    {f.lines.map((line, n) => (
                      <span key={n} className={n < (f.dark || 1) ? "h-4 text-black" : "h-4"}>{line}</span>
                    ))}
                  </span>
                </li>
              ))}
            </ul>
          </div>
          <ScrollBar before="h-[250px]" thumb="h-[74px]" />
          <span className="w-0.5" />
        </div>

        <div className="flex h-[77px] flex-col pr-[18px] pt-[9px]">
          <div className="flex items-center">
            <label htmlFor="nombre" className="w-[176px] text-right">Nombre:</label>
            <div className="ml-1.5 flex h-6 flex-1 items-center rounded-[2px] border border-[#b5d2ea] border-t-[#3d7bad] bg-white pr-1">
              <input id="nombre" type="text" className="min-w-0 flex-1 px-1 outline-none" />
              <button type="button" aria-label="Nombres recientes">
                <Triangle className="block h-1 w-[7px]" />
              </button>
            </div>
            <div className="relative ml-3 h-[23px] w-[188px]">
              <select aria-label="Tipo de archivo" className="h-full w-full appearance-none rounded-[2px] border border-[#707070] bg-[linear-gradient(180deg,#f2f2f2_0%,#ebebeb_50%,#dddddd_50%,#cfcfcf_100%)] pl-[3px] text-black shadow-[inset_0_0_0_1px_#fcfcfc]">
                <option>Todos los archivos</option>
              </select>
              <Triangle className="pointer-events-none absolute right-1 top-[9px] h-1 w-2" />
            </div>
          </div>
          <div className="mt-1.5 flex justify-end gap-3.5 pr-px">
            <div className="flex h-6 w-[86px] items-stretch rounded-[3px] border border-[#2c628b] bg-[linear-gradient(180deg,#e8f5fc_0%,#d4edfb_48%,#bfe3f8_50%,#a9daf5_100%)] shadow-[inset_0_0_0_2px_#35c8f5]">
              <button type="button" className="flex-1">Abrir</button>
              <button type="button" aria-label="Más opciones de abrir" className="my-0.5 flex w-3.5 items-center justify-center border-l border-[#4a5a66] pr-0.5">
                <Triangle className="h-1 w-2" />
              </button>
            </div>
            <button type="button" className="h-6 w-[86px] rounded-[3px] border border-[#707070] bg-[linear-gradient(180deg,#f2f2f2_0%,#ebebeb_50%,#dddddd_50%,#cfcfcf_100%)] shadow-[inset_0_0_0_1px_#fcfcfc]">
              Cancelar
            </button>
          </div>
          <svg viewBox="0 0 8 8" className="-mr-[14px] mt-[3px] h-2 w-2 shrink-0 self-end" fill="#b4b4b4" aria-hidden="true">
            <path d="M6 0h2v2H6zM3 3h2v2H3zM6 3h2v2H6zM0 6h2v2H0zM3 6h2v2H3zM6 6h2v2H6z" />
          </svg>
        </div>
      </div>
    </section>
  );
}

/* ---------- taskbar ---------- */

function StartOrb() {
  return (
    <svg viewBox="0 0 38 38" className="block h-[38px] w-[38px]" aria-hidden="true">
      <defs>
        <radialGradient id="orb" cx=".5" cy="1" r=".95">
          <stop offset="0" stopColor="#35e0ff" />
          <stop offset="0.450" stopColor="#1774b4" />
          <stop offset="0.8" stopColor="#3c6c92" />
          <stop offset="1" stopColor="#a8c6dc" />
        </radialGradient>
      </defs>
      <circle cx="19" cy="19" r="17.500" fill="url(#orb)" stroke="#123f66" strokeWidth="1.500" />
      <path d="M10 11c3-1.800 5.500-1.800 8.500-.3l-1.300 7.600C14.500 17 12 17 8.800 18.500z" fill="#ee6a2c" />
      <path d="M20 11.200c3 1.500 5.500 1.400 9-.2l-1.800 7.700c-3 1.400-5.500 1.400-8.500 0z" fill="#93c848" />
      <path d="M8.500 20c3-1.500 5.500-1.500 8.300-.2L15.500 27c-2.700-1.300-5-1.300-8.300.2z" fill="#4aa6e6" />
      <path d="M18.400 20.200c3 1.400 5.500 1.400 8.500.1L25.500 27.500c-3 1.400-5.500 1.400-8.400 0z" fill="#fbcf3b" />
      <path d="M3.500 17C5 7 12 3 19 3s14 4 15.500 14C26 13 12 13 3.500 17z" fill="#fff" opacity=".28" />
    </svg>
  );
}

function AppIcon({ kind }) {
  if (kind === "firefox") return <FirefoxIcon className="h-8 w-8" />;
  const icons = {
    ie: (
      <g>
        <path d="M30 18.500H12.500c.5 6 8.500 7 11 2.700h6C26 32 6 30.500 6 17 6 2.500 30.500 2 30 18.500zM12.700 14H24c-.8-6-10.500-6-11.300 0z" fill="#6fcdf6" stroke="#1f7fc0" strokeWidth=".8" />
        <path d="M29.500 9c2-6-1-9-7-6C12 8 0 22 1.500 29c1 3 5 2 9-.5-3.500.8-6 .5-5.500-3C6 18 15.500 7.500 23.500 4c4.500-1.700 6 .5 6 5z" fill="#f8d437" stroke="#c79a12" strokeWidth=".5" />
      </g>
    ),
    explorer: (
      <g>
        <path d="M2 6h8l2 2h18v20H2z" fill="#f2d87a" stroke="#c7a548" strokeWidth=".7" />
        <path d="M4 4h8v4H4z" fill="#fbf3c9" stroke="#c9b56a" strokeWidth=".5" />
        <path d="M5 4.500h2v1.500H5z" fill="#3da53d" />
        <path d="M12 6h8v4h-8zM20 8h8v4h-8z" fill="#fffbe6" stroke="#c9b56a" strokeWidth=".5" />
        <path d="M13 6.500h2V8h-2z" fill="#d5402b" />
        <path d="M21 9h4v1.500h-4z" fill="#2f8ad0" />
        <path d="M2 12h28v16H2z" fill="#f8e49a" />
        <path d="M5 31v-8l3-3h16l3 3v8h-4v-6H9v6z" fill="#8ecdec" stroke="#5aa3cc" strokeWidth=".7" />
      </g>
    ),
    wmp: (
      <g>
        <path d="M14 5h13v22H14z" fill="#8ec0df" stroke="#5f95b7" />
        <path d="M4 6h19v22H4z" fill="#9fd0ec" stroke="#6aa5c9" />
        <circle cx="13.500" cy="17" r="8.500" fill="#f07d22" />
        <path d="M10.500 11v12l9-6z" fill="#fff" />
      </g>
    ),
    skype: (
      <g>
        <path d="M3 9C1 3 7 0 12 2c9-2 18 4 17 14 3 6 0 13-6 13-1 0-3 0-4-.6C9 30 2 23 3 14 2 12 2 11 3 9z" fill="#12b0f3" stroke="#078dc9" strokeWidth=".6" />
        <path d="M22 11.500C21 7 10 6 10 12c0 5.500 9.500 4 9.500 7 0 2.500-6 2-7-1.500-3 0-3 1.500-2 3.500 2.500 4 13 3.500 13-2.500 0-6-9.500-5-9.500-7.500 0-2 4-1.500 5 .8 1.500.8 3 .4 3-.3z" fill="#fff" />
      </g>
    ),
    xampp: (
      <g>
        <rect x="0" y="0" width="32" height="32" rx="4" fill="#f3771d" stroke="#b14d0c" />
        <path d="M8 7h3c3 0 5 2 5 5 0-3 2-5 5-5h3M8 25h3c3 0 5-2 5-5 0 3 2 5 5 5h3M7 8c-3 4 0 8 3 8-3 0-5 5-2 8M25 8c3 4 0 8-3 8 3 0 5 5 2 8M12 16h8" fill="none" stroke="#fff" strokeWidth="3.400" strokeLinecap="round" />
      </g>
    ),
    cmd: (
      <g>
        <rect x="1" y="4" width="30" height="25" fill="#000" stroke="#9aa3ac" strokeWidth="1.500" />
        <path d="M1.500 4.500h29V7h-29z" fill="#d9dee3" />
        <text x="4" y="16" fontSize="8" fill="#fff" fontFamily="Liberation Mono, monospace">C:\_</text>
      </g>
    ),
    npp: (
      <g>
        <path d="M4 3h17l6 6v22H4z" fill="#f4f6ee" stroke="#6f7f5c" />
        <path d="M4.500 22h22v8.500h-22z" fill="#7bc41f" />
        <path d="M4.500 18h22v5h-22z" fill="#c8e58c" />
        <path d="M5 3h16" stroke="#555" strokeDasharray="1 1.500" strokeWidth="2.500" />
        <path d="M9 21v-8h4v8M14.500 16.500h4M16.500 14.500v4M20 16.500h4M22 14.500v4" fill="none" stroke="#222" strokeWidth="1.300" />
        <path d="M19 27l1-4L28 4l3 1.500-8.500 18.500z" fill="#f6b93a" stroke="#9b6413" strokeWidth=".7" />
        <path d="M28 4l1.500-3.500L32.500 2 31 5.500z" fill="#c94545" />
      </g>
    ),
  };
  return (
    <svg viewBox="0 0 32 32" className="block h-8 w-8" aria-hidden="true">
      {icons[kind]}
    </svg>
  );
}

const apps = [
  { kind: "firefox", label: "Firefox", state: "active" },
  { kind: "ie", label: "Internet Explorer", state: "idle" },
  { kind: "explorer", label: "Explorador", state: "open" },
  { kind: "wmp", label: "Reproductor multimedia", state: "idle" },
  { kind: "skype", label: "Skype", state: "open" },
  { kind: "xampp", label: "XAMPP", state: "open" },
  { kind: "cmd", label: "Símbolo del sistema", state: "open" },
  { kind: "npp", label: "Notepad++", state: "open" },
];

const appStyle = {
  active: "border-[#17405f] bg-[linear-gradient(120deg,#d8e8f3_0%,#a8cbe3_45%,#8dbddd_100%)] shadow-[inset_0_0_0_1px_#e9f4fb]",
  open: "border-[#17405f] bg-[linear-gradient(120deg,#8fc4e4_0%,#58abd8_50%,#4aa4d6_100%)] shadow-[inset_0_0_0_1px_#a9d5ee]",
  idle: "border-transparent",
};

function Taskbar() {
  return (
    <footer className="relative flex h-10 items-stretch justify-between overflow-hidden border-t border-[#223f5c] bg-[linear-gradient(90deg,#1c6499_0%,#2478b4_5%,#2f93ce_12%,#3da0d8_30%,#3597d2_36%,#2a82c8_48%,#2173bc_58%,#1f67b2_68%,#1d5ca4_82%,#164578_86%,#133d6c_100%)] shadow-[inset_0_1px_0_#9cc4e2]">
      <svg viewBox="0 0 860 40" className="pointer-events-none absolute left-[560px] top-0 h-10 w-[860px]" aria-hidden="true">
        <defs>
          <linearGradient id="beam" x1="0" y1="1" x2="1" y2="0">
            <stop offset="0.2" stopColor="#2f80cc" />
            <stop offset="0.5" stopColor="#b5dafd" />
            <stop offset="0.8" stopColor="#2f80cc" />
          </linearGradient>
        </defs>
        <path d="M0 6C90 26 200 26 330 0H270C170 18 70 8 0 6z" fill="#fff" opacity=".08" />
        <path d="M54 0h16l16 40H70z" fill="#fff" opacity=".1" />
        <path d="M262 0h18C220 20 170 30 150 40h-20C160 24 220 12 262 0z" fill="#fff" opacity=".12" />
        <path d="M740 0h28C792 12 812 26 826 40H796C780 26 762 12 740 0z" fill="url(#beam)" />
      </svg>
      <div className="relative flex items-center">
        <button type="button" aria-label="Inicio" className="ml-2">
          <StartOrb />
        </button>
        <div className="ml-[13px] flex gap-[3px]">
          {apps.map((a) => (
            <button key={a.kind} type="button" aria-label={a.label} className={`flex h-[38px] w-[59px] items-center justify-center rounded-[3px] border ${appStyle[a.state]}`}>
              <AppIcon kind={a.kind} />
            </button>
          ))}
        </div>
      </div>
      <div className={`relative flex items-center text-[11px] leading-[17px] text-white ${ui}`}>
        <span className="pb-1.5">ES</span>
        <svg viewBox="0 0 16 16" className="ml-2 h-4 w-4" aria-hidden="true">
          <path d="M3 5c2-4 4 1 6-2s3-1 5-2" fill="none" stroke="#9a9a9a" />
          <rect x=".5" y="7" width="15" height="8.500" rx="1" fill="#8f8f8f" stroke="#c9c9c9" />
          <path d="M2.500 9.500h11M2.500 11.500h11M4.500 13.500h7" stroke="#f0f0f0" strokeDasharray="1.200 .8" />
        </svg>
        <Triangle dir="up" className="ml-[13px] mt-1 h-1 w-2" />
        <svg viewBox="0 0 16 16" className="ml-3 h-4 w-4" fill="#fff" aria-hidden="true">
          <path d="M1 1h1.500v15H1zM3 2c3-1.500 4 0 6 .5v7C7 9.500 6 8 3 9.500zM9.500 4c2 .8 3.500.8 5.500.2l-1 5c-1.500.5-3 .5-4.500 0z" />
        </svg>
        <svg viewBox="0 0 16 16" className="ml-2 h-4 w-4" fill="#fff" aria-hidden="true">
          <path d="M0 12.500h2V15H0zM3.300 10.500h2V15h-2zM6.600 8h2v7h-2zM10 5h2v10h-2zM13.300 2h2v13h-2z" />
        </svg>
        <svg viewBox="0 0 16 16" className="ml-2 h-4 w-4" fill="#fff" aria-hidden="true">
          <path d="M0 5.500h2.500L6.500 1v14l-4-4.500H0z" />
          <path d="M8.500 5.500c1 1.500 1 3.500 0 5M10.700 4c1.800 2.500 1.800 5.500 0 8M13 2.500c2.500 3.500 2.500 7.500 0 11" fill="none" stroke="#fff" />
        </svg>
        <div className="ml-4 w-[60px] whitespace-nowrap text-center">
          <div>06:25 p.m.</div>
          <div>26/05/2014</div>
        </div>
        <button type="button" aria-label="Mostrar escritorio" className="ml-3 h-full w-3.5 border border-[#7f9fbd] bg-[linear-gradient(160deg,#6f8fae_0%,#2c5078_40%,#163a66_60%)]" />
      </div>
    </footer>
  );
}

export default function App() {
  return (
    <div className="relative flex min-h-screen flex-col overflow-hidden bg-[#cccccc]">
      <TabStrip />
      <Toolbar />
      <ExercisePage />
      <Taskbar />
      <FileDialog />
    </div>
  );
}
